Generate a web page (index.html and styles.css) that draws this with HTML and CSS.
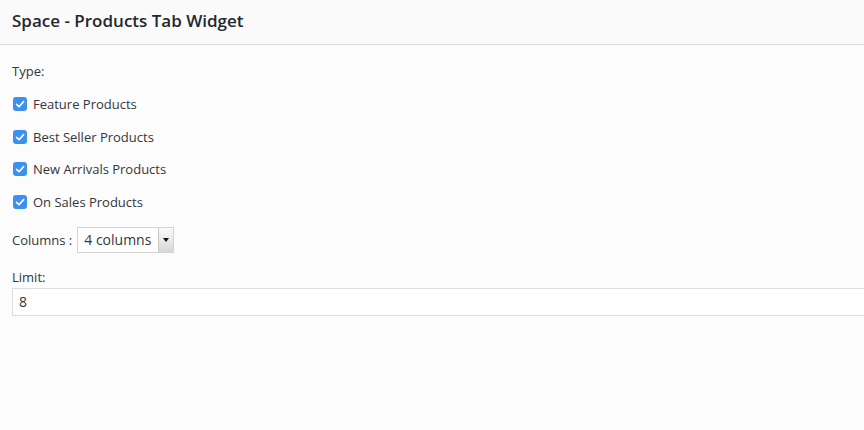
FILE: index.html
```html
<!doctype html>
<html>
<head>
    <meta charset="utf-8"/>
    <title>Space - Products Tab Widget</title>
    <link rel="stylesheet" href="styles.css">
</head>
<body>
    <div class="widget-top">
        <h3>Space - Products Tab Widget</h3>
    </div>

    <div class="widget-inside">
        <p class="label">Type:</p>

        <label class="check">
            <input type="checkbox" checked>
            <span class="box"><svg viewBox="0 0 14 14" width="14" height="14"><path d="M3.6 7.4 L6 9.8 L10.6 4.6" fill="none" stroke="#fff" stroke-width="1.6" stroke-linecap="round" stroke-linejoin="round"/></svg></span>
            Feature Products
        </label>
        <label class="check">
            <input type="checkbox" checked>
            <span class="box"><svg viewBox="0 0 14 14" width="14" height="14"><path d="M3.6 7.4 L6 9.8 L10.6 4.6" fill="none" stroke="#fff" stroke-width="1.6" stroke-linecap="round" stroke-linejoin="round"/></svg></span>
            Best Seller Products
        </label>
        <label class="check">
            <input type="checkbox" checked>
            <span class="box"><svg viewBox="0 0 14 14" width="14" height="14"><path d="M3.6 7.4 L6 9.8 L10.6 4.6" fill="none" stroke="#fff" stroke-width="1.6" stroke-linecap="round" stroke-linejoin="round"/></svg></span>
            New Arrivals Products
        </label>
        <label class="check">
            <input type="checkbox" checked>
            <span class="box"><svg viewBox="0 0 14 14" width="14" height="14"><path d="M3.6 7.4 L6 9.8 L10.6 4.6" fill="none" stroke="#fff" stroke-width="1.6" stroke-linecap="round" stroke-linejoin="round"/></svg></span>
            On Sales Products
        </label>

        <div class="columns">
            <span>Columns :</span>
            <span class="select">
                <select>
                    <option>4 columns</option>
                    <option>3 columns</option>
                    <option>2 columns</option>
                </select>
            </span>
        </div>

        <p class="label limit">Limit:</p>
        <input class="text" type="text" value="8">
    </div>
</body>
</html>
```

FILE: styles.css
```css
html {
    font-family:"Open Sans","Noto Sans",sans-serif;
    font-size:13px;
    color:#32373c;
    background:#fcfcfc;
}
body {
    margin:0;
    overflow:hidden;
}

* {
    box-sizing:border-box;
}

.widget-top {
    height:45px;
    padding:0 12px;
    border-bottom:1px solid #dcdcdc;
    background:#fafafa;
    display:flex;
    align-items:center;
}
.widget-top h3 {
    margin:0;
    margin-top:-4px;
    font-size:17px;
    font-weight:600;
    color:#23282d;
}

.widget-inside {
    padding:16px 0 0 12px;
    background:#fcfcfc;
}

.label {
    margin:0;
    line-height:20px;
}

.check {
    display:flex;
    align-items:center;
    height:20px;
    margin-top:12.5px;
    padding-left:1px;
}
.check:first-of-type { margin-top:13px; }
.check input { display:none; }
.check .box {
    width:14px;
    height:14px;
    border-radius:3px;
    background:#3d8ff0;
    margin-right:6px;
    display:inline-flex;
}

.columns {
    display:flex;
    align-items:center;
    margin-top:15px;
}
.select {
    position:relative;
    display:inline-block;
    margin-left:5px;
}
.select select {
    -webkit-appearance:none;
    appearance:none;
    font-family:inherit;
    font-size:14px;
    color:#32373c;
    height:26px;
    width:97px;
    padding:0 0 0 6px;
    border:1px solid #d4d4d4;
    background:#fff;
    border-radius:0;
}
.select::after {
    content:"";
    position:absolute;
    top:1px;
    right:1px;
    width:14px;
    height:24px;
    border-left:1px solid #c8c8c8;
    background:linear-gradient(#fafafa,#d6d6d6);
    pointer-events:none;
}
.select::before {
    content:"";
    position:absolute;
    top:11px;
    right:5px;
    border-left:3px solid transparent;
    border-right:3px solid transparent;
    border-top:4px solid #111;
    z-index:1;
    pointer-events:none;
}

.limit {
    margin-top:14px;
}
.text {
    display:block;
    width:880px;
    height:28px;
    margin-top:1px;
    padding:0 6px;
    font-family:inherit;
    font-size:14px;
    color:#32373c;
    border:1px solid #dddddd;
    background:#fff;
    outline:none;
}
```
